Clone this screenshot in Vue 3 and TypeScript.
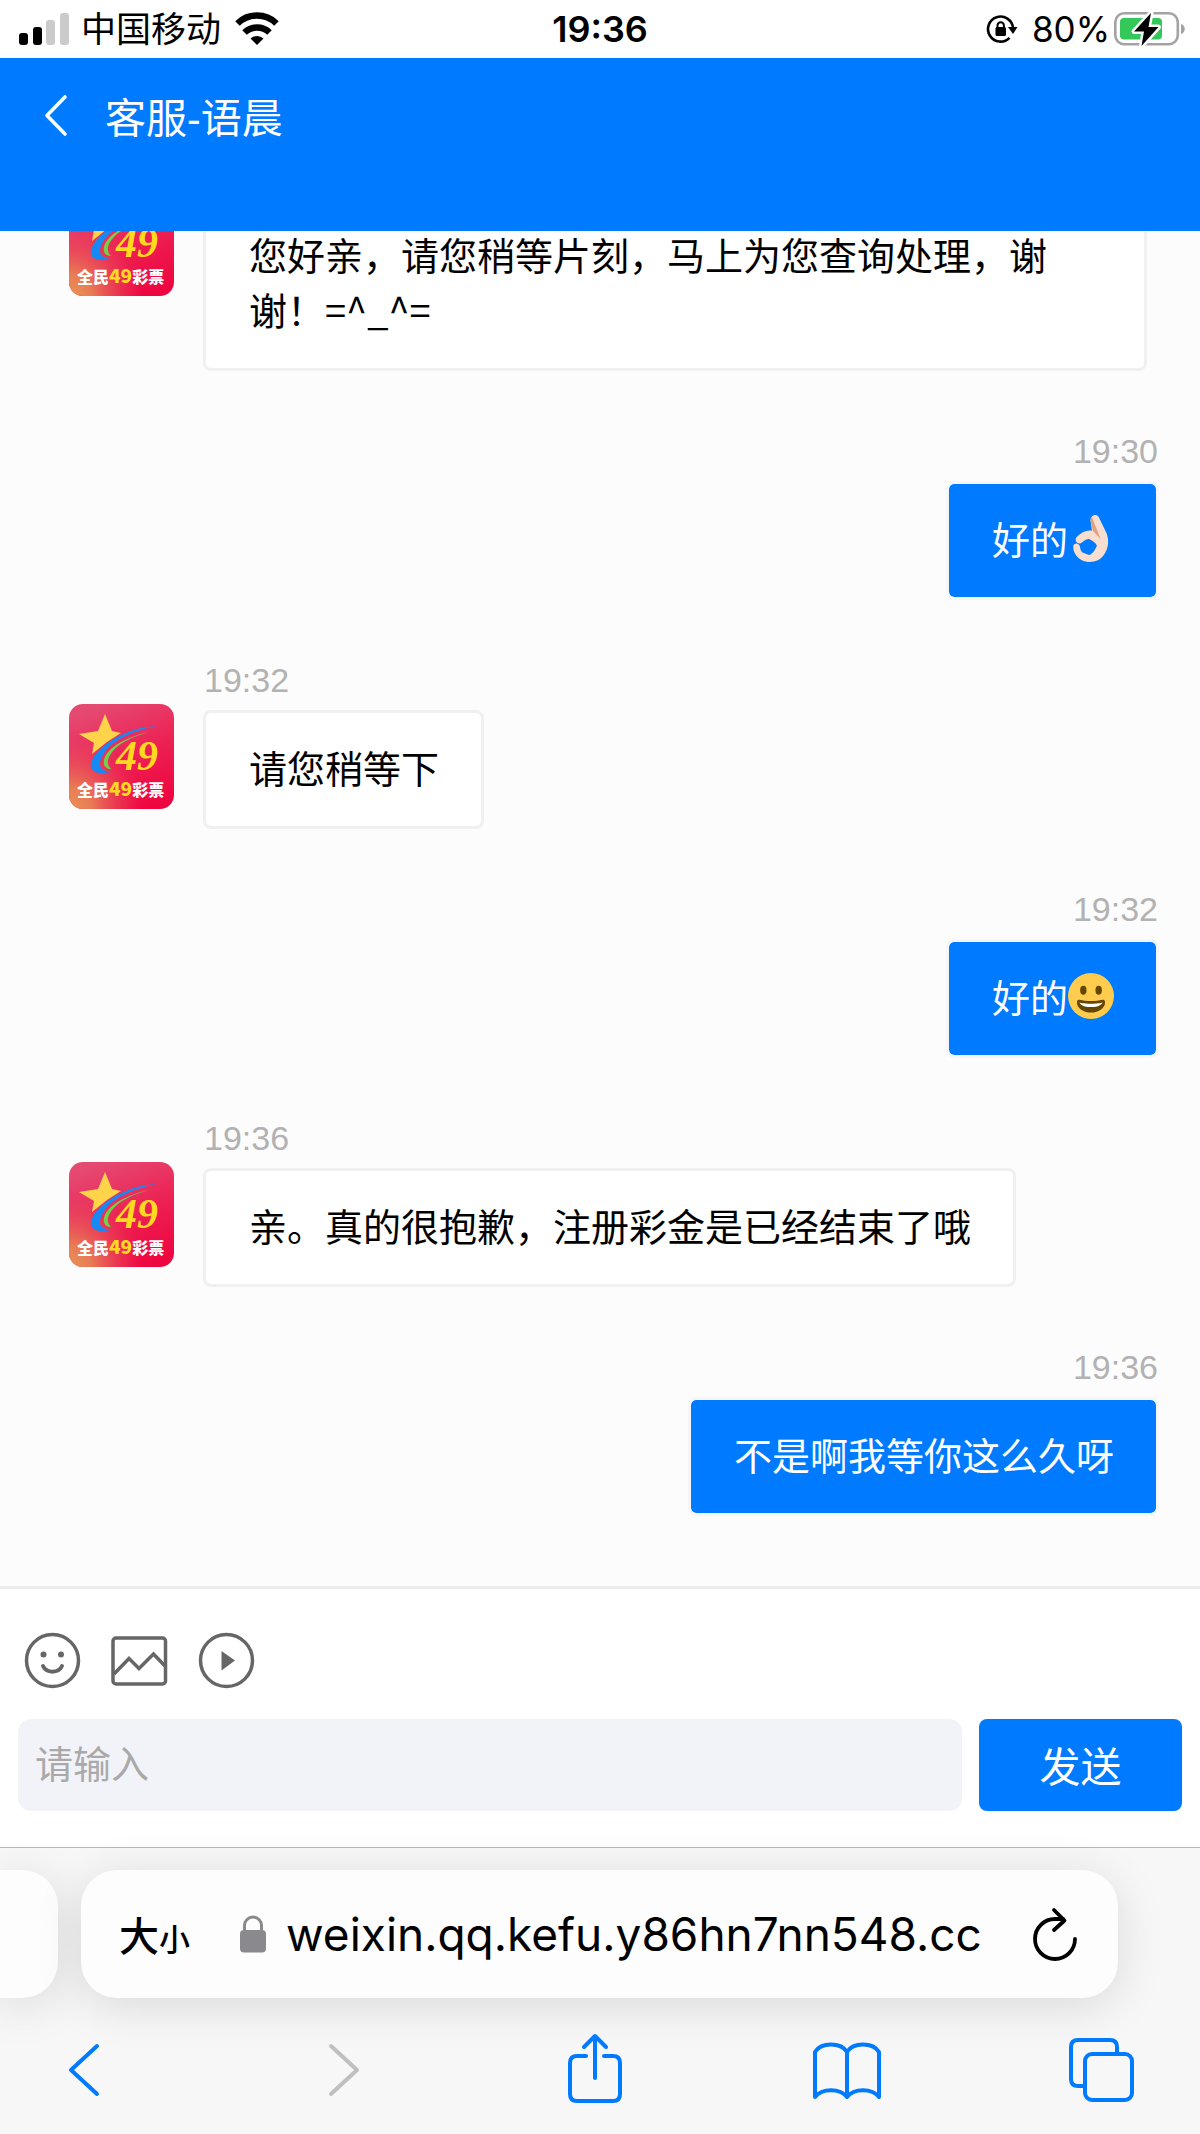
<script setup lang="ts">
import { ref } from 'vue'

interface Message {
  id: number
  mine: boolean
  time: string
  text: string
  emoji?: 'ok' | 'grin'
}

const messages: Message[] = [
  { id: 1, mine: false, time: '19:30', text: '您好亲，请您稍等片刻，马上为您查询处理，谢谢！=^_^=' },
  { id: 2, mine: true, time: '19:30', text: '好的', emoji: 'ok' },
  { id: 3, mine: false, time: '19:32', text: '请您稍等下' },
  { id: 4, mine: true, time: '19:32', text: '好的', emoji: 'grin' },
  { id: 5, mine: false, time: '19:36', text: '亲。真的很抱歉，注册彩金是已经结束了哦' },
  { id: 6, mine: true, time: '19:36', text: '不是啊我等你这么久呀' },
]

const draft = ref('')
const address = ref('weixin.qq.kefu.y86hn7nn548.cc')
</script>

<template>
  <div class="screen">
    <div class="status">
      <div class="status-side">
        <svg class="signal" viewBox="0 0 50 32" aria-hidden="true">
          <rect x="0" y="20" width="9" height="12" rx="3" />
          <rect x="14" y="14" width="9" height="18" rx="3" />
          <rect x="27" y="7" width="9" height="25" rx="3" fill="#cbcbcb" />
          <rect x="41" y="0" width="9" height="32" rx="3" fill="#cbcbcb" />
        </svg>
        <span class="carrier">中国移动</span>
        <svg class="wifi" viewBox="0 0 44 32" aria-hidden="true">
          <path d="M2.500 10.500a28 28 0 0 1 39 0" fill="none" stroke="#000" stroke-width="6.500" />
          <path d="M9.500 19.500a18 18 0 0 1 25 0" fill="none" stroke="#000" stroke-width="6.500" />
          <path d="M15.500 25.500a9.500 9.500 0 0 1 13 0L22 32z" />
        </svg>
      </div>
      <span class="clock">19:36</span>
      <div class="status-side end">
        <svg class="rotation" viewBox="0 0 32 28" aria-hidden="true">
          <path d="M27 13A12.500 12.500 0 1 0 23.500 22.800" fill="none" stroke="#000" stroke-width="2.600" />
          <path d="M22 12h9.500l-4.500 7z" />
          <rect x="9.500" y="12" width="10.500" height="9" rx="1.500" />
          <path d="M11.500 13v-2.500a3.200 3.200 0 0 1 6.400 0V13" fill="none" stroke="#000" stroke-width="2" />
        </svg>
        <span class="percent">80%</span>
        <svg class="battery" viewBox="0 0 70 36" aria-hidden="true">
          <rect x="1.300" y="2.300" width="62.500" height="31" rx="9" fill="#fff" stroke="#a3a3a3" stroke-width="2.600" />
          <path d="M67 13c5 1.500 5 8.500 0 10z" fill="#a3a3a3" />
          <rect x="6" y="7" width="42" height="21.500" rx="4" fill="#34c759" />
          <path d="M37 2L20 20.500h10L27.500 35 44.500 16H34.500z" stroke="#fff" stroke-width="5" stroke-linejoin="round" />
          <path d="M37 2L20 20.500h10L27.500 35 44.500 16H34.500z" />
        </svg>
      </div>
    </div>

    <header class="header">
      <button class="header-back" type="button" aria-label="返回">
        <svg viewBox="0 0 22 50" aria-hidden="true">
          <path d="M20 3L2 21.500 20 40" fill="none" stroke="#fff" stroke-width="3.600" stroke-linecap="round" stroke-linejoin="round" />
        </svg>
      </button>
      <h1>客服-语晨</h1>
    </header>

    <main class="chat">
      <article v-for="m in messages" :key="m.id" class="message" :class="{ mine: m.mine }">
        <svg v-if="!m.mine" class="avatar" viewBox="0 0 105 105" role="img" aria-label="客服头像">
          <defs>
            <linearGradient :id="'base' + m.id" x1="0.3" y1="0" x2="0.7" y2="1">
              <stop offset="0" stop-color="#e54a72" />
              <stop offset="0.55" stop-color="#ed1f52" />
              <stop offset="1" stop-color="#ee0640" />
            </linearGradient>
            <radialGradient :id="'glow' + m.id" cx="0" cy="1" r="0.7">
              <stop offset="0" stop-color="#e89355" />
              <stop offset="0.3" stop-color="#e87c55" />
              <stop offset="1" stop-color="#e84a60" stop-opacity="0" />
            </radialGradient>
          </defs>
          <rect width="105" height="105" rx="14" :fill="'url(#base' + m.id + ')'" />
          <rect width="105" height="105" rx="14" :fill="'url(#glow' + m.id + ')'" />
          <path d="M36 10l7 17 9 2-14 9-15 12 2-11-15-9 19-3z" fill="#ffd34a" />
          <path d="M88 22C58 23 27 42 22 59c-2 9 8 12 20 9-11-1-14-7-8-17 8-14 28-24 54-29z" fill="#1689f5" />
          <path d="M80 28C58 33 38 43 35 56c-1 6 2 9 7 9-5-5-4-11 2-18 7-8 18-14 36-19z" fill="#6fd04a" />
          <text x="47" y="66" class="logo-number">49</text>
          <text x="8" y="92" class="logo-name">全民<tspan class="logo-accent">49</tspan>彩票</text>
        </svg>
        <div class="body">
          <time>{{ m.time }}</time>
          <div class="bubble">
            <span>{{ m.text }}</span>
            <svg v-if="m.emoji === 'ok'" class="emoji" viewBox="0 0 140 140" role="img" aria-label="OK">
              <path fill="#f7dece" d="M69 20C66 2 84-6 93 5l24 50c9 22 6 48-8 67-14 21-45 27-68 15-17-9-25-25-25-41 0-12 17-13 20-1 1 9 4 16 8 19l20 8c12-4 20-18 24-29-4-9-14-15-24-20-10-1-17 8-25 13-12 4-21-11-12-20 14-14 31-22 46-18z" />
              <path fill="#dfa084" d="M69 20c-1-5 0-10 4-13l26 66-23-24z" />
            </svg>
            <svg v-if="m.emoji === 'grin'" class="emoji" viewBox="0 0 36 36" role="img" aria-label="笑脸">
              <circle cx="18" cy="18" r="18" fill="#ffcc4d" />
              <ellipse cx="12" cy="13.500" rx="2.500" ry="3.500" fill="#664500" />
              <ellipse cx="24" cy="13.500" rx="2.500" ry="3.500" fill="#664500" />
              <path fill="#664500" d="M18 22c-3.600 0-6-.4-9-1-.7-.1-2 0-2 2 0 4 4.600 8 11 8s11-4 11-8c0-2-1.300-2.100-2-2-3 .6-5.400 1-9 1z" />
              <path fill="#fff" d="M9 23s3 1 9 1 9-1 9-1-1 3.700-9 3.700S9 23 9 23z" />
            </svg>
          </div>
        </div>
      </article>
    </main>

    <form class="composer" @submit.prevent>
      <div class="tools">
        <button type="button" aria-label="表情">
          <svg viewBox="0 0 57 57" aria-hidden="true">
            <g fill="none" stroke="#666" stroke-width="3.500">
              <circle cx="28.500" cy="28.500" r="26" />
              <path d="M19 34c3.500 7.500 15.500 7.500 19 0" stroke-linecap="round" stroke-width="4" />
            </g>
            <circle cx="19.500" cy="22.500" r="3" fill="#666" />
            <circle cx="37" cy="22.500" r="3" fill="#666" />
          </svg>
        </button>
        <button type="button" aria-label="图片">
          <svg viewBox="0 0 57 57" aria-hidden="true">
            <g fill="none" stroke="#666" stroke-width="3.500">
              <rect x="2" y="6" width="52.500" height="46" rx="3" />
              <path d="M3 42l15-15.500 10 10L42.500 22 54 34" />
            </g>
          </svg>
        </button>
        <button type="button" aria-label="视频">
          <svg viewBox="0 0 57 57" aria-hidden="true">
            <circle cx="28.500" cy="28.500" r="26" fill="none" stroke="#666" stroke-width="3.500" />
            <path d="M23.500 19L37 28.500 23.500 38.500z" fill="#666" />
          </svg>
        </button>
      </div>
      <div class="entry">
        <input v-model="draft" type="text" placeholder="请输入" aria-label="请输入" />
        <button class="send" type="submit">发送</button>
      </div>
    </form>

    <footer class="browser">
      <div class="tabs">
        <div class="tab previous"></div>
        <div class="tab current">
          <button class="text-size" type="button" aria-label="大小"><span>大</span><small>小</small></button>
          <svg class="lock" viewBox="0 0 28 38" aria-hidden="true">
            <rect x="1" y="15" width="26" height="22.500" rx="4" fill="#8a8a8e" />
            <path d="M5.500 17v-6.500a8.500 8.500 0 0 1 17 0V17" fill="none" stroke="#8a8a8e" stroke-width="3" />
          </svg>
          <input v-model="address" class="address" type="text" aria-label="网址" />
          <button class="reload" type="button" aria-label="刷新">
            <svg viewBox="0 0 44 52" aria-hidden="true">
              <g fill="none" stroke="#000" stroke-width="3.800" stroke-linecap="round" stroke-linejoin="round">
                <path d="M42 31A20 20 0 1 1 22 11h8" />
                <path d="M21 2l10.500 10.500L21 22" />
              </g>
            </svg>
          </button>
        </div>
      </div>
      <nav class="toolbar">
        <button type="button" aria-label="后退">
          <svg viewBox="0 0 70 70" aria-hidden="true"><path d="M48 11L22 35l26 24" /></svg>
        </button>
        <button type="button" aria-label="前进" disabled>
          <svg viewBox="0 0 70 70" aria-hidden="true"><path d="M28 11l26 24-26 24" /></svg>
        </button>
        <button type="button" aria-label="分享">
          <svg viewBox="0 0 70 70" aria-hidden="true">
            <path d="M28 21h-9q-7 0-7 7v31q0 7 7 7h36q7 0 7-7V28q0-7-7-7h-9M37 43V2M26 12L37 1l11 11" />
          </svg>
        </button>
        <button type="button" aria-label="书签">
          <svg viewBox="0 0 70 70" aria-hidden="true">
            <path d="M35 17C29 7 9 7 3 17v45c7-9 25-9 32 0 7-9 25-9 32 0V17C61 7 41 7 35 17zM35 17v44" />
          </svg>
        </button>
        <button type="button" aria-label="标签页">
          <svg viewBox="0 0 70 70" aria-hidden="true">
            <rect x="19" y="19" width="47" height="46" rx="7" />
            <path d="M18 51h-6q-7 0-7-7V12q0-7 7-7h32q7 0 7 7v6" />
          </svg>
        </button>
      </nav>
    </footer>
  </div>
</template>

<style>
body {
  background: #fcfcfc;
}
</style>

<style scoped>
.screen {
  display: flex;
  flex-direction: column;
  height: 100vh;
  overflow: hidden;
  color: #000;
  background: #fcfcfc;
  font-family: "Liberation Sans", "Noto Sans CJK SC", sans-serif;
}

button {
  padding: 0;
  border: 0;
  background: none;
  color: inherit;
  font-family: inherit;
}

svg {
  display: block;
  flex: none;
  overflow: visible;
}

.status {
  display: flex;
  align-items: center;
  flex: none;
  height: 58px;
  padding: 0 16px;
  background: #fff;
  font-family: Inter, "Noto Sans CJK SC", sans-serif;
  font-size: 35px;
  line-height: 60px;
}

.status-side {
  display: flex;
  align-items: center;
  flex: 1;
}

.end {
  justify-content: flex-end;
}

.signal {
  width: 50px;
  height: 32px;
  margin-left: 3px;
}

.carrier {
  margin: 0 14px 0 12px;
}

.wifi {
  width: 44px;
  height: 32px;
}

.clock {
  font-size: 36px;
  font-weight: 600;
}

.rotation {
  width: 32px;
  height: 28px;
  margin-right: 14px;
}

.battery {
  width: 70px;
  height: 36px;
  margin-left: 4px;
}

.header {
  display: flex;
  align-items: flex-start;
  flex: none;
  gap: 38px;
  padding: 36px 45px 87px;
  background: #007aff;
  color: #fff;
}

.header-back svg {
  width: 22px;
  height: 50px;
}

h1 {
  margin: 0;
  font-size: 41px;
  font-weight: 400;
  line-height: 50px;
}

.chat {
  display: flex;
  flex-direction: column;
  flex: 1;
  justify-content: flex-end;
  gap: 60px;
  min-height: 0;
  padding: 0 41px 70px 69px;
  overflow: hidden;
}

.message {
  display: flex;
  align-items: flex-start;
  flex: none;
  gap: 29px;
  padding-right: 12px;
}

.mine {
  justify-content: flex-end;
  padding-right: 0;
}

.avatar {
  width: 105px;
  height: 105px;
  margin-top: 44px;
}

.logo-number {
  fill: #ffd91f;
  font-family: "Liberation Serif", serif;
  font-size: 42px;
  font-style: italic;
  font-weight: 700;
}

.logo-name {
  fill: #fff;
  font-family: "Noto Sans CJK SC", sans-serif;
  font-size: 16px;
  font-weight: 900;
}

.logo-accent {
  fill: #ffd91f;
  font-size: 19px;
}

.body {
  display: flex;
  flex-direction: column;
  align-items: flex-start;
  gap: 10px;
}

.mine .body {
  align-items: flex-end;
}

time {
  padding: 0 1px;
  color: #b2b2b2;
  font-size: 34px;
  line-height: 40px;
}

.bubble {
  display: flex;
  align-items: center;
  padding: 26px 42px 32px 43px;
  border: 3px solid #f0f0f0;
  border-radius: 8px;
  background: #fff;
  font-family: "Noto Sans CJK SC", sans-serif;
  font-size: 38px;
  line-height: 55px;
}

.mine .bubble {
  border-color: #f5f6f8;
  background: #007aff;
  background-clip: padding-box;
  color: #fff;
}

.emoji {
  width: 46px;
  height: 46px;
}

.composer {
  flex: none;
  padding: 43px 18px 36px;
  border-top: 3px solid #ededed;
  background: #fff;
}

.tools {
  display: flex;
  gap: 30px;
  padding: 0 6px;
}

.tools svg {
  width: 57px;
  height: 57px;
}

.entry {
  display: flex;
  gap: 17px;
  margin-top: 30px;
}

.entry input {
  box-sizing: border-box;
  flex: 1;
  min-width: 0;
  height: 92px;
  padding: 0 17px;
  border: 0;
  border-radius: 13px;
  background: #f2f3f8;
  font-family: inherit;
  font-size: 38px;
}

.entry input::placeholder {
  color: #a9a9a9;
  opacity: 1;
}

.send {
  width: 203px;
  padding-bottom: 3px;
  border-radius: 8px;
  background: #007aff;
  color: #fff;
  font-size: 41px;
}

.browser {
  flex: none;
  border-top: 1px solid #b8b8b8;
  background: #f7f7f7;
}

.tabs {
  display: flex;
  gap: 23px;
  padding: 22px 82px 0 0;
}

.tab {
  box-sizing: border-box;
  height: 128px;
  background: #fdfdfd;
  box-shadow: 0 8px 48px rgba(0, 0, 0, 0.12);
}

.previous {
  flex: none;
  width: 58px;
  border-radius: 0 36px 36px 0;
}

.current {
  display: flex;
  align-items: center;
  flex: 1;
  min-width: 0;
  padding: 0 41px 0 38px;
  border-radius: 36px;
}

.text-size {
  display: flex;
  align-items: baseline;
  font-size: 40px;
  font-weight: 500;
}

.text-size small {
  font-size: 31px;
}

.lock {
  width: 28px;
  height: 38px;
  margin: 0 19px 0 49px;
}

.address {
  flex: 1;
  min-width: 0;
  padding: 0;
  border: 0;
  background: none;
  font-family: Inter, sans-serif;
  font-size: 46px;
}

.reload svg {
  width: 44px;
  height: 52px;
}

.toolbar {
  display: flex;
  justify-content: space-between;
  padding: 37px 64px 29px 49px;
}

.toolbar svg {
  width: 70px;
  height: 70px;
  fill: none;
  stroke: #007aff;
  stroke-width: 4;
  stroke-linecap: round;
  stroke-linejoin: round;
}

.toolbar button:disabled svg {
  stroke: #c0c0c0;
}
</style>
